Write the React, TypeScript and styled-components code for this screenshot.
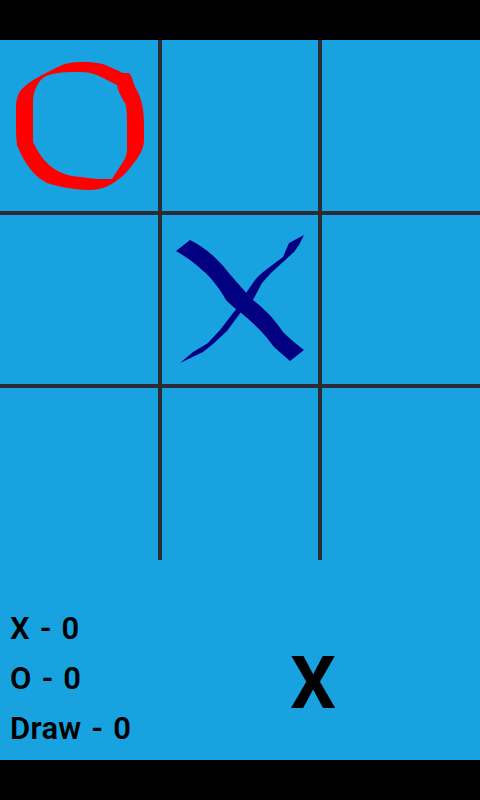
import styled, { createGlobalStyle } from "styled-components";

const GlobalStyle = createGlobalStyle`
  html, body {
    margin: 0;
    padding: 0;
    background: #000;
  }
`;

const Screen = styled.div`
  width: 480px;
  height: 800px;
  padding: 40px 0;
  box-sizing: border-box;
  background: #000;
  font-family: Roboto, "Liberation Sans", sans-serif;
`;

const Game = styled.div`
  height: 720px;
  background: #19a2e0;
  color: #000;
`;

// the lines between cells are just the grid background showing through the gap
const Board = styled.div`
  display: grid;
  grid-template-columns: 158px 156px 158px;
  grid-template-rows: 171px 169px 172px;
  gap: 4px;
  height: 520px;
  background: #2b2b33;
`;

const Cell = styled.div`
  background: #19a2e0;
`;

const Mark = styled.svg`
  display: block;
  width: 100%;
  height: 100%;
`;

const Footer = styled.div`
  display: flex;
  justify-content: space-between;
  height: 200px;
`;

const Scores = styled.div`
  display: flex;
  flex-direction: column;
  justify-content: flex-end;
  padding: 0 0 6px 10px;
`;

const Score = styled.div`
  font-size: 31px;
  font-weight: 600;
  line-height: 50px;
  letter-spacing: 0.3px;
  word-spacing: 2px;
  white-space: pre;
`;

const Turn = styled.div`
  width: 334px;
  padding-top: 76px;
  text-align: center;
  font-size: 72px;
  font-weight: 700;
  line-height: 96px;
`;

const CircleMark = () => (
  <Mark viewBox="0 40 158 171">
    <path
      fill="#ff0000"
      fillRule="evenodd"
      d="M80 62 C90 62 100 62 110 67 L123 73 L129 73 C132 76 133 82 135 87 C140 95 144 105 144 125 L144 140 C144 150 138 158 130 168 C122 178 108 190 90 190 C75 190 60 187 47 183 C33 176 24 162 17 145 C16 137 16 131 16 125 L16 108 C16 100 18 92 23 88 C30 81 45 73 60 66 C66 63 73 62 80 62 Z
         M80 72 C92 72 98 75 107 80 L117 85 C118 90 119 93 125 103 C127 108 127 115 127 125 L127 152 C126 156 125 159 123 162 L112 179 L97 179 L80 177 C68 176 60 173 53 168 C44 162 38 152 33 142 L33 102 C33 92 37 83 43 78 C50 73 60 72 80 72 Z"
    />
  </Mark>
);

const CrossMark = () => (
  <Mark viewBox="162 215 156 169">
    <path
      fill="#000080"
      d="M176 251 L190 240 C202 246 216 256 228 272 C236 281 244 291 253 300 C262 307 273 317 283 332 C289 338 296 344 304 350 L290 361 C284 356 279 351 274 347 C268 339 262 330 240 312 C233 307 229 303 226 300 C220 289 210 276 202 270 C195 263 186 257 176 251 Z"
    />
    <path
      fill="#000080"
      d="M304 235 L289 243 L283 257 L267 269 C262 273 258 276 255 280 L246 293 L253 300 L262 283 L271 273 L283 262 L294 252 L299 245 Z"
    />
    <path
      fill="#000080"
      d="M180 363 L193 352 L208 343 L220 330 L237 308 L241 312 L227 331 L213 344 L203 352 Z"
    />
  </Mark>
);

const board = ["o", "", "", "", "x", "", "", "", ""];
const scores = ["X - 0", "O - 0", "Draw - 0"];

const App: React.FC = () => {
  return (
    <Screen>
      <GlobalStyle />
      <Game>
        <Board>
          {board.map((mark, i) => (
            <Cell key={i}>
              {mark === "o" && <CircleMark />}
              {mark === "x" && <CrossMark />}
            </Cell>
          ))}
        </Board>
        <Footer>
          <Scores>
            {scores.map((s) => (
              <Score key={s}>{s}</Score>
            ))}
          </Scores>
          <Turn>X</Turn>
        </Footer>
      </Game>
    </Screen>
  );
};

export default App;
